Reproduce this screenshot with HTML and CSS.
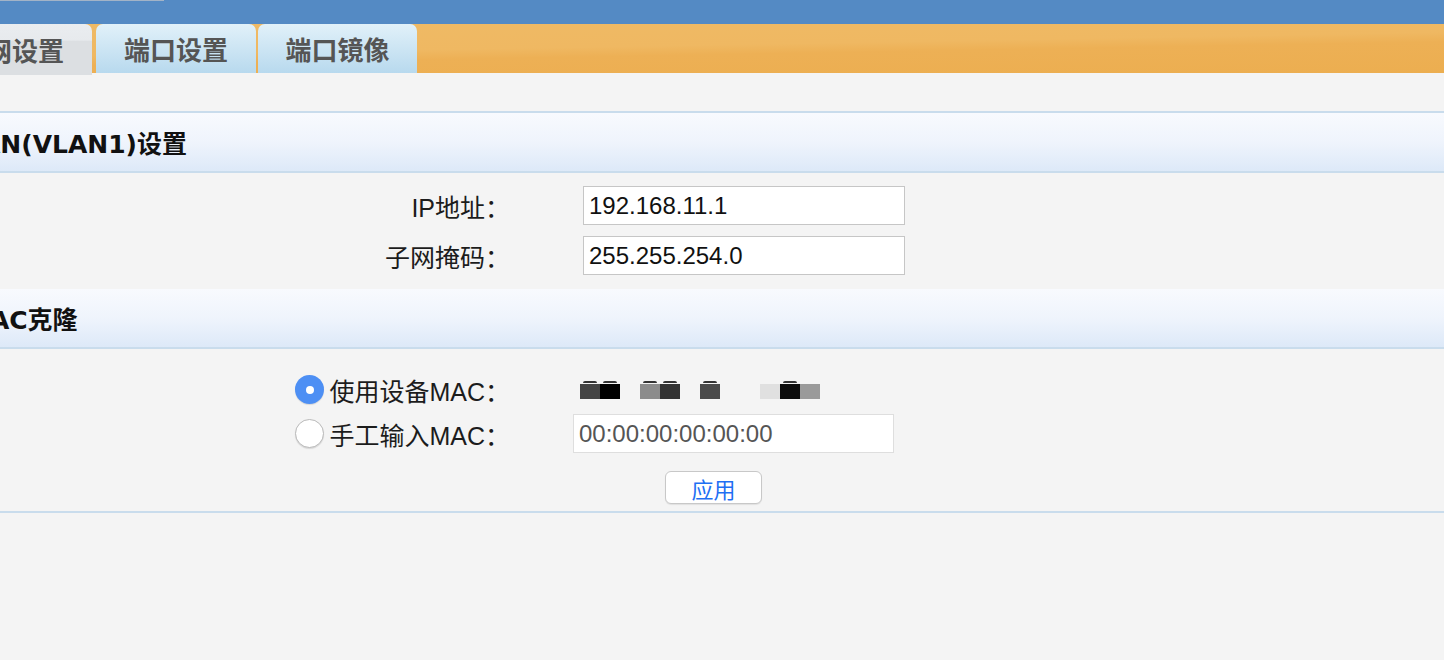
FILE: index.html
```html
<!DOCTYPE html>
<html lang="zh-CN">
<head>
    <meta charset="UTF-8">
    <meta name="viewport" content="width=device-width, initial-scale=1.0">
    <title>内网设置</title>
    <link rel="stylesheet" href="styles.css">
</head>
<body>
    <div class="topbar">
        <div class="topbar-line"></div>
    </div>

    <div class="tabs">
        <div class="tab tab-active">内网设置</div>
        <div class="tab">端口设置</div>
        <div class="tab tab-last">端口镜像</div>
    </div>

    <div class="page">
        <div class="section-title section-first">LAN(VLAN1)设置</div>
        <div class="section-body lan-body">
            <div class="form-row">
                <label class="field-label">IP地址：</label>
                <div class="field-value lan-value">
                    <input class="text-input" type="text" value="192.168.11.1">
                </div>
            </div>
            <div class="form-row">
                <label class="field-label">子网掩码：</label>
                <div class="field-value lan-value">
                    <input class="text-input" type="text" value="255.255.254.0">
                </div>
            </div>
        </div>

        <div class="section-title">MAC克隆</div>
        <div class="section-body mac-body">
            <div class="form-row radio-row">
                <label class="field-label">
                    <span class="radio radio-on"></span>使用设备MAC：
                </label>
                <div class="field-value mac-value">
                    <!-- device MAC is masked in the screenshot -->
                    <div class="mac-mask">
                        <span class="blk c44 cap"></span><span class="blk c00 cap"></span>
                        <span class="blk gap"></span>
                        <span class="blk c8c cap"></span><span class="blk c33 cap"></span>
                        <span class="blk gap"></span>
                        <span class="blk c4a cap"></span>
                        <span class="blk gap"></span><span class="blk gap"></span>
                        <span class="blk ce0"></span><span class="blk c0d cap"></span><span class="blk c9a"></span>
                    </div>
                </div>
            </div>
            <div class="form-row manual-row">
                <label class="field-label">
                    <span class="radio"></span>手工输入MAC：
                </label>
                <div class="field-value mac-value">
                    <input class="text-input text-input-soft" type="text" value="00:00:00:00:00:00">
                </div>
            </div>
            <div class="form-row actions-row">
                <div></div>
                <div class="field-value">
                    <button class="apply-btn" type="button">应用</button>
                </div>
            </div>
        </div>
    </div>
</body>
</html>
```

FILE: styles.css
```css
body {
    margin: 0;
    background: #f4f4f4;
    font-family: "Liberation Sans", "Noto Sans CJK SC", sans-serif;
    color: #1c1c1c;
    overflow: hidden;
}

/* top blue strip */
.topbar {
    height: 24px;
    background: #548ac4;
}

.topbar-line {
    width: 164px;
    height: 1px;
    background: #a2b3c7;
}

/* orange tab strip */
.tabs {
    display: flex;
    align-items: flex-start;
    height: 49px;
    background: linear-gradient(179deg, #efba65 0%, #efb862 45%, #edb055 58%, #ecae50 100%);
}

.tab {
    width: 160px;
    height: 49px;
    flex-shrink: 0;
    margin-left: 2px;
    display: flex;
    align-items: center;
    justify-content: center;
    border-radius: 7px 7px 0 0;
    background: linear-gradient(#e1f1f9, #b8d9ee);
    color: #555;
    font-family: "Noto Sans CJK SC", sans-serif;
    font-weight: 700;
    font-size: 26px;
}

.tab-active {
    margin-left: -68px;
    margin-right: 2px;
    height: 51px;
    background: linear-gradient(#eaedf0 0%, #e7eaed 32%, #dcdfe2 33%, #dcdfe2 100%);
    position: relative;
}

.tab-last {
    width: 159px;
}

/* content */
.page {
    padding-top: 38px;
}

.section-title {
    height: 58px;
    display: flex;
    align-items: center;
    margin-left: -35px;
    background: linear-gradient(#f8fafe 0%, #eff4fc 50%, #dde9f8 100%);
    border-bottom: 2px solid #c9dcec;
    font-family: "DejaVu Sans", "Noto Sans CJK SC", sans-serif;
    font-weight: 700;
    font-size: 25px;
    color: #111;
}

.section-first {
    border-top: 2px solid #c9dcec;
}

.section-body {
    display: flex;
    flex-direction: column;
}

.lan-body {
    padding: 13px 0 14px;
    gap: 11px;
}

.mac-body {
    padding: 21px 0 7px;
    border-bottom: 2px solid #c9dcec;
}

.form-row {
    display: grid;
    grid-template-columns: 510px 1fr;
    align-items: center;
    min-height: 39px;
}

.field-label {
    display: flex;
    align-items: center;
    justify-content: flex-end;
    font-size: 25px;
    color: #1c1c1c;
}

.lan-value {
    padding-left: 73px;
}

.mac-value {
    padding-left: 63px;
}

.text-input {
    box-sizing: border-box;
    width: 322px;
    height: 39px;
    padding: 0 5px;
    border: 1px solid #c6c6c6;
    background: #fff;
    font-family: "Liberation Sans", sans-serif;
    font-size: 24px;
    color: #111;
    outline: none;
}

.text-input-soft {
    width: 321px;
    border-color: #dedede;
    color: #555;
}

.manual-row {
    margin-top: 5px;
}

.actions-row {
    margin-top: 18px;
    min-height: 33px;
}

/* radio buttons */
.radio {
    box-sizing: border-box;
    width: 29px;
    height: 29px;
    margin-right: 5px;
    border-radius: 50%;
    border: 1px solid #b9b9b9;
    background: #fff;
    box-shadow: 0 1px 1px rgba(0, 0, 0, 0.12);
    display: flex;
    align-items: center;
    justify-content: center;
}

.radio-on {
    border: none;
    background: #4d8ff4;
}

.radio-on::after {
    content: "";
    width: 8px;
    height: 8px;
    border-radius: 50%;
    background: #fff;
}

/* masked MAC value */
.mac-mask {
    display: flex;
    padding-left: 7px;
}

.blk {
    width: 20px;
    height: 15px;
    margin-top: 4px;
    position: relative;
}

.blk.cap::before {
    content: "";
    position: absolute;
    left: 3px;
    right: 3px;
    top: -3px;
    height: 2px;
    border-radius: 2px 2px 0 0;
    background: #333;
}

.gap { width: 20px; }
.c44 { background: #444; }
.c00 { background: #000; }
.c8c { background: #8c8c8c; }
.c33 { background: #333; }
.c4a { background: #4a4a4a; }
.ce0 { background: #e0e0e0; }
.c0d { background: #0d0d0d; }
.c9a { background: #9a9a9a; }

.apply-btn {
    margin-left: 155px;
    width: 97px;
    height: 33px;
    border: 1px solid #c8c8c8;
    border-radius: 6px;
    background: #fff;
    box-shadow: 0 1px 1px rgba(0, 0, 0, 0.08);
    color: #1f6ff3;
    font-family: "Noto Sans CJK SC", sans-serif;
    font-size: 22px;
    padding: 0;
}
```
